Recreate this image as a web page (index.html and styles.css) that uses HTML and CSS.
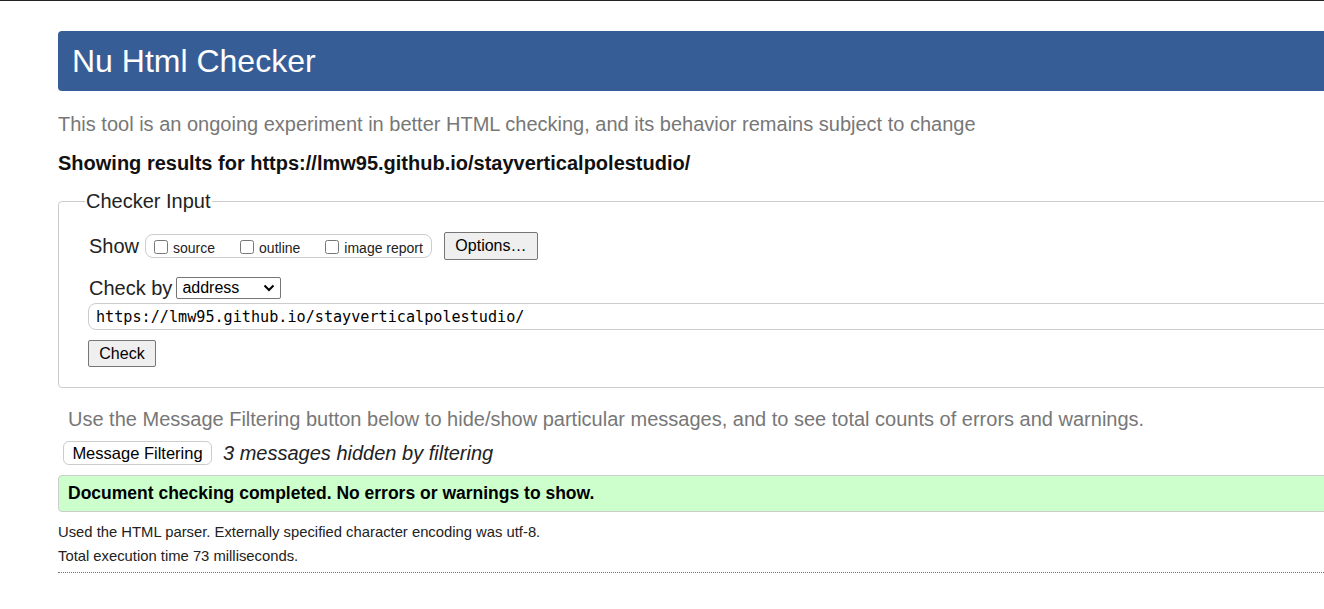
FILE: index.html
```html
<!DOCTYPE html>
<html lang="en">
<head>
<meta charset="utf-8">
<title>Nu Html Checker</title>
<link rel="stylesheet" href="styles.css">
</head>
<body>
<div class="page">
  <h1 class="header">Nu Html Checker</h1>
  <p class="intro">This tool is an ongoing experiment in better HTML checking, and its behavior remains subject to change</p>
  <p class="showing">Showing results for https://lmw95.github.io/stayverticalpolestudio/</p>
  <fieldset class="checker">
    <legend class="legend">Checker Input</legend>
    <div class="row row-show">
      <span class="lbl">Show</span>
      <span class="opts">
        <label class="opt"><input type="checkbox" class="cb">source</label>
        <label class="opt"><input type="checkbox" class="cb">outline</label>
        <label class="opt last"><input type="checkbox" class="cb">image report</label>
      </span>
      <button class="btn btn-options" type="button">Options…</button>
    </div>
    <div class="row row-by">
      <span class="lbl">Check by</span>
      <span class="select">address<svg class="chev" width="12" height="8" viewBox="0 0 12 8"><path d="M1.5 1.5 L6 6 L10.5 1.5" fill="none" stroke="#000" stroke-width="2"/></svg></span>
    </div>
    <div class="row row-url">
      <span class="url">https://lmw95.github.io/stayverticalpolestudio/</span>
    </div>
    <div class="row row-check">
      <button class="btn btn-check" type="button">Check</button>
    </div>
  </fieldset>
  <p class="filter-note">Use the Message Filtering button below to hide/show particular messages, and to see total counts of errors and warnings.</p>
  <div class="filter-row">
    <button class="btn-filter" type="button">Message Filtering</button>
    <em class="hidden-count">3 messages hidden by filtering</em>
  </div>
  <div class="success">Document checking completed. No errors or warnings to show.</div>
  <p class="small first">Used the HTML parser. Externally specified character encoding was utf-8.</p>
  <p class="small">Total execution time 73 milliseconds.</p>
  <div class="dotted"></div>
</div>
</body>
</html>
```
FILE: styles.css
```css
html {
  overflow: hidden;
  border-top: 1px solid #222;
  background: #fff;
}
body {
  margin: 0;
  font-family: "Liberation Sans", Arial, sans-serif;
  color: #222;
}
.page {
  width: 1500px;
  margin-left: 58px;
  padding-top: 30px;
}
.header {
  margin: 0;
  height: 60px;
  line-height: 60px;
  padding-left: 14px;
  background: #365d96;
  color: #fff;
  font-size: 32px;
  font-weight: normal;
  border-radius: 4px 0 0 4px;
}
.intro {
  margin: 21px 0 0;
  font-size: 20px;
  line-height: 24px;
  color: #777;
}
.showing {
  margin: 15px 0 0;
  font-size: 20px;
  line-height: 24px;
  font-weight: bold;
  color: #111;
}
.checker {
  margin: 15px 0 0;
  padding: 19px 0 20px 30px;
  border: 1px solid #ccc;
  border-radius: 4px;
  min-width: 0;
}
.legend {
  font-size: 20px;
  line-height: 23px;
  padding: 0 1px;
  margin-left: -4px;
  color: #222;
}
.row {
  display: flex;
  align-items: center;
}
.lbl {
  font-size: 20px;
  color: #222;
}
.row-show {
  height: 28px;
}
.opts {
  margin-left: 6px;
  height: 22px;
  border: 1px solid #ccc;
  border-radius: 8px;
  padding: 0 8px 0 4px;
  display: flex;
  align-items: flex-end;
  font-size: 14px;
  color: #222;
}
.opt {
  display: flex;
  align-items: flex-end;
  margin-right: 21px;
  line-height: 16px;
  padding-bottom: 1px;
}
.opt.last {
  margin-right: 0;
}
.cb {
  width: 14px;
  height: 14px;
  margin: 0 5px 2px 4px;
}
.btn {
  font-family: "Liberation Sans", Arial, sans-serif;
  font-size: 16px;
  color: #000;
  background: #efefef;
  border: 1px solid #767676;
  border-radius: 2px;
  padding: 0;
}
.btn-options {
  margin-left: 12px;
  width: 94px;
  height: 28px;
}
.row-by {
  margin-top: 17px;
  height: 22px;
}
.select {
  margin-left: 4px;
  width: 105px;
  height: 22px;
  box-sizing: border-box;
  border: 1px solid #767676;
  border-radius: 2px;
  font-size: 16px;
  color: #000;
  display: flex;
  align-items: center;
  justify-content: space-between;
  padding: 0 5px 0 5px;
}
.chev {
  display: block;
}
.row-url {
  margin-top: 4px;
  margin-left: -1px;
}
.url {
  display: flex;
  align-items: center;
  width: 1500px;
  height: 27px;
  box-sizing: border-box;
  border: 1px solid #ccc;
  border-radius: 8px;
  padding-left: 7px;
  font-family: "DejaVu Sans Mono", "Liberation Mono", monospace;
  font-size: 15.15px;
  color: #000;
}
.row-check {
  margin-top: 10px;
  margin-left: -1px;
}
.btn-check {
  width: 68px;
  height: 27px;
}
.filter-note {
  margin: 19px 0 0 10px;
  font-size: 20px;
  line-height: 24px;
  color: #777;
}
.filter-row {
  margin: 10px 0 0 5px;
  display: flex;
  align-items: center;
  height: 24px;
}
.btn-filter {
  font-family: "Liberation Sans", Arial, sans-serif;
  font-size: 16.5px;
  color: #000;
  background: #fff;
  border: 1px solid #ccc;
  border-radius: 6px;
  height: 24px;
  width: 149px;
  padding: 0;
}
.hidden-count {
  margin-left: 11px;
  font-size: 20px;
  color: #222;
}
.success {
  margin-top: 10px;
  height: 37px;
  box-sizing: border-box;
  background: #ccffcc;
  border: 1px solid #ccc;
  border-radius: 4px 0 0 4px;
  padding-left: 9px;
  display: flex;
  align-items: center;
  font-weight: bold;
  font-size: 17.5px;
  color: #000;
}
.small {
  margin: 0;
  font-size: 14.8px;
  line-height: 24px;
  color: #222;
}
.small.first {
  margin-top: 8px;
}
.dotted {
  margin-top: 4px;
  border-top: 1px dotted #777;
}
```
